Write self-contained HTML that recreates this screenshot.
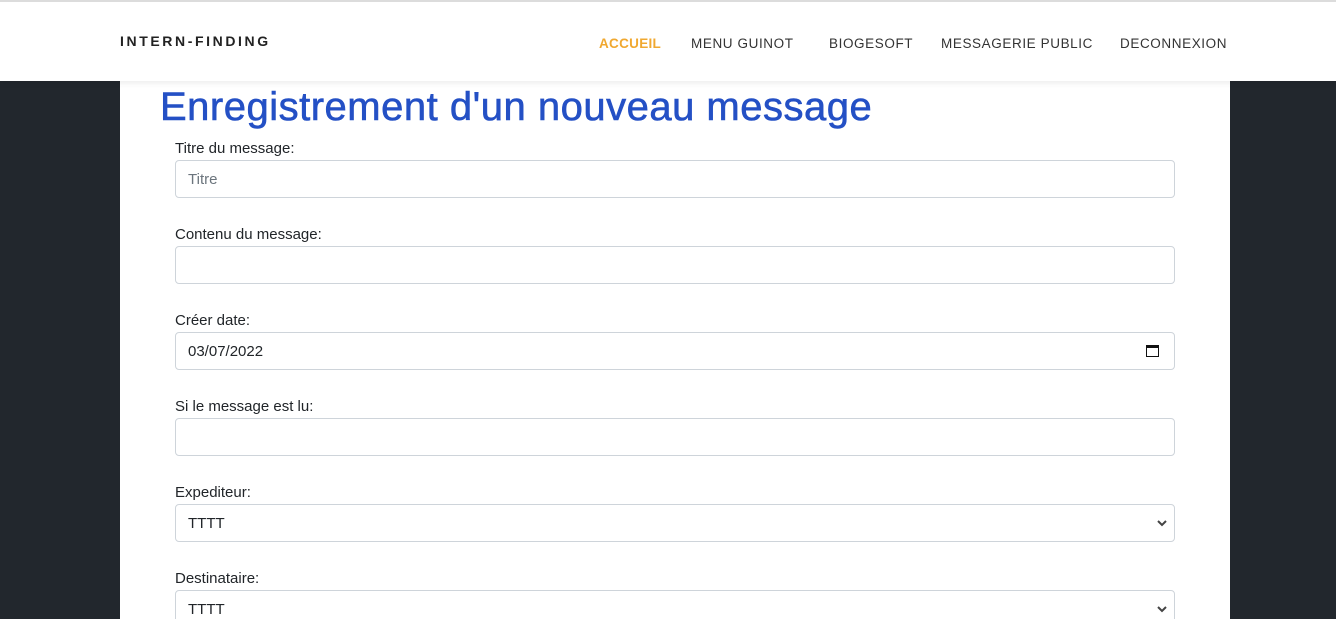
<!DOCTYPE html>
<html><head><meta charset="utf-8"><style>
*{box-sizing:border-box;margin:0;padding:0}
html{width:1336px;height:619px;overflow:hidden}
body{width:1336px;height:619px;overflow:hidden;background:#22272d;font-family:"Liberation Sans",sans-serif;color:#212529;position:relative}
.top{position:absolute;left:0;top:0;width:1336px;height:81px;background:#fff;border-top:2px solid #dcdcdc;box-shadow:0 2px 6px rgba(0,0,0,.08);z-index:2}
.brand{position:absolute;left:120px;top:31px;font-size:14px;font-weight:bold;letter-spacing:2.6px;color:#222}
.nav{position:absolute;top:34px;font-size:13.5px;letter-spacing:.6px;color:#333}
.main{position:absolute;left:120px;top:81px;width:1110px;height:538px;background:#fff;overflow:hidden}
h1{position:absolute;left:40px;top:4px;font-size:40px;font-weight:normal;color:#2450c5;letter-spacing:.5px;-webkit-text-stroke:.6px #2450c5;white-space:nowrap}
.lbl{position:absolute;left:55px;font-size:15px;color:#212529}
.inp{position:absolute;left:55px;width:1000px;height:38px;border:1px solid #ced4da;border-radius:4px;font-size:15px;padding:10px 12px;color:#212529}
</style></head><body>
<div class="top">
<div class="brand">INTERN-FINDING</div>
<div class="nav" style="left:599px;color:#f0a830;font-weight:bold;letter-spacing:.3px">ACCUEIL</div>
<div class="nav" style="left:691px">MENU GUINOT</div>
<div class="nav" style="left:829px">BIOGESOFT</div>
<div class="nav" style="left:941px">MESSAGERIE PUBLIC</div>
<div class="nav" style="left:1120px">DECONNEXION</div>
</div>
<div class="main">
<h1>Enregistrement d'un nouveau message</h1>
<div class="lbl" style="top:59px">Titre du message:</div>
<div class="inp" style="top:79px;color:#6c757d">Titre</div>
<div class="lbl" style="top:145px">Contenu du message:</div>
<div class="inp" style="top:165px"></div>
<div class="lbl" style="top:231px">Créer date:</div>
<div class="inp" style="top:251px">03/07/2022<span style="position:absolute;right:15px;top:12px;width:13px;height:12px;border:1.5px solid #111;border-top-width:3px"></span></div>
<div class="lbl" style="top:317px">Si le message est lu:</div>
<div class="inp" style="top:337px"></div>
<div class="lbl" style="top:403px">Expediteur:</div>
<div class="inp" style="top:423px">TTTT<svg style="position:absolute;right:6px;top:14px" width="12" height="9"><path d="M2 2l4 4 4-4" stroke="#444" stroke-width="2" fill="none"/></svg></div>
<div class="lbl" style="top:489px">Destinataire:</div>
<div class="inp" style="top:509px">TTTT<svg style="position:absolute;right:6px;top:14px" width="12" height="9"><path d="M2 2l4 4 4-4" stroke="#444" stroke-width="2" fill="none"/></svg></div>
</div>
</body></html>
